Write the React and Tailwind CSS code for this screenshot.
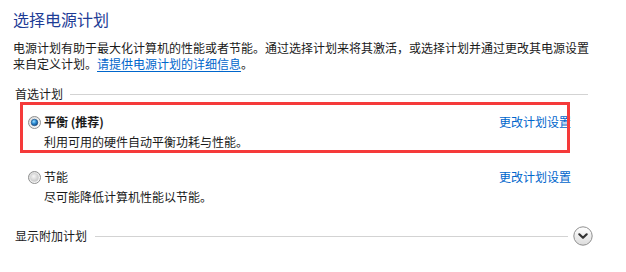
import React from "react";

function Radio({ checked }) {
  return (
    <svg width="13" height="13" viewBox="0 0 13 13" className="shrink-0">
      <defs>
        <linearGradient id={checked ? "rbg1" : "rbg0"} x1="0" y1="0" x2="1" y2="1">
          <stop offset="0" stopColor="#d8d8d8" />
          <stop offset="1" stopColor="#ffffff" />
        </linearGradient>
        <radialGradient id="dot" cx="0.4" cy="0.35" r="0.7">
          <stop offset="0" stopColor="#9fe0ff" />
          <stop offset="0.45" stopColor="#2f8fd6" />
          <stop offset="1" stopColor="#0b3e7a" />
        </radialGradient>
        <radialGradient id="gdot" cx="0.4" cy="0.35" r="0.7">
          <stop offset="0" stopColor="#f6f6f6" />
          <stop offset="1" stopColor="#c6c6c6" />
        </radialGradient>
      </defs>
      <circle cx="6.5" cy="6.5" r="6" fill={`url(#${checked ? "rbg1" : "rbg0"})`} stroke="#8e8f8f" strokeWidth="1" />
      {checked ? (
        <circle cx="6.5" cy="6.5" r="3.3" fill="url(#dot)" stroke="#1d4f82" strokeWidth="0.6" />
      ) : (
        <circle cx="6.5" cy="6.5" r="4" fill="url(#gdot)" stroke="#d0d0d0" strokeWidth="0.6" />
      )}
    </svg>
  );
}

function Chevron() {
  return (
    <svg width="20" height="20" viewBox="0 0 20 20" className="shrink-0">
      <defs>
        <linearGradient id="chev" x1="0" y1="0" x2="0" y2="1">
          <stop offset="0" stopColor="#ffffff" />
          <stop offset="1" stopColor="#dcdcdc" />
        </linearGradient>
      </defs>
      <circle cx="10" cy="10" r="9.2" fill="url(#chev)" stroke="#8f8f8f" strokeWidth="1" />
      <path d="M6.3 8.3 L10 11.8 L13.7 8.3" fill="none" stroke="#333333" strokeWidth="2.2" strokeLinecap="round" strokeLinejoin="round" />
    </svg>
  );
}

function Plan({ checked, name, desc, bold }) {
  return (
    <div className="flex items-start">
      <div className="w-[17px] pl-[2px] h-[16px] flex items-center pt-[1px]">
        <Radio checked={checked} />
      </div>
      <div className="flex flex-col ml-[1px]">
        <div className={`leading-[16px] ${bold ? "font-bold" : ""}`}>{name}</div>
        <div className="leading-[16px] mt-[4px]">{desc}</div>
      </div>
      <div className="ml-auto leading-[16px] text-[#0066cc]">更改计划设置</div>
    </div>
  );
}

export default function App() {
  return (
    <div
      className="relative w-[626px] h-[272px] bg-white text-[12px] text-[#1a1a1a] overflow-hidden"
      style={{ fontFamily: '"Noto Sans CJK SC", "Noto Sans", sans-serif' }}
    >
      <div className="flex flex-col pl-[13px] pt-[9px]">
        <div className="text-[16px] leading-[20px] text-[#1e3c96]">选择电源计划</div>
        <div className="mt-[11px] leading-[16px]">
          电源计划有助于最大化计算机的性能或者节能。通过选择计划来将其激活，或选择计划并通过更改其电源设置
          <br />
          来自定义计划。<span className="text-[#0066cc] underline underline-offset-2">请提供电源计划的详细信息</span>。
        </div>

        <div className="mt-[14px] flex items-center pl-[2px] w-[575px]">
          <span className="leading-[16px]">首选计划</span>
          <div className="ml-[7px] flex-1 h-px bg-[#d3d3d3]" />
        </div>

        <div className="mt-[12px] ml-[13px] w-[545px] flex flex-col gap-[19px]">
          <Plan checked name="平衡 (推荐)" desc="利用可用的硬件自动平衡功耗与性能。" bold />
          <Plan name="节能" desc="尽可能降低计算机性能以节能。" />
        </div>

        <div className="mt-[21px] flex items-center pl-[2px] w-[580px]">
          <span className="leading-[16px]">显示附加计划</span>
          <div className="ml-[8px] flex-1 h-px bg-[#d3d3d3]" />
          <div className="ml-[5px]">
            <Chevron />
          </div>
        </div>
      </div>

      <div className="absolute left-[20px] top-[102px] w-[550px] h-[51px] border-[3px] border-[#f53a3a] pointer-events-none" />
    </div>
  );
}
